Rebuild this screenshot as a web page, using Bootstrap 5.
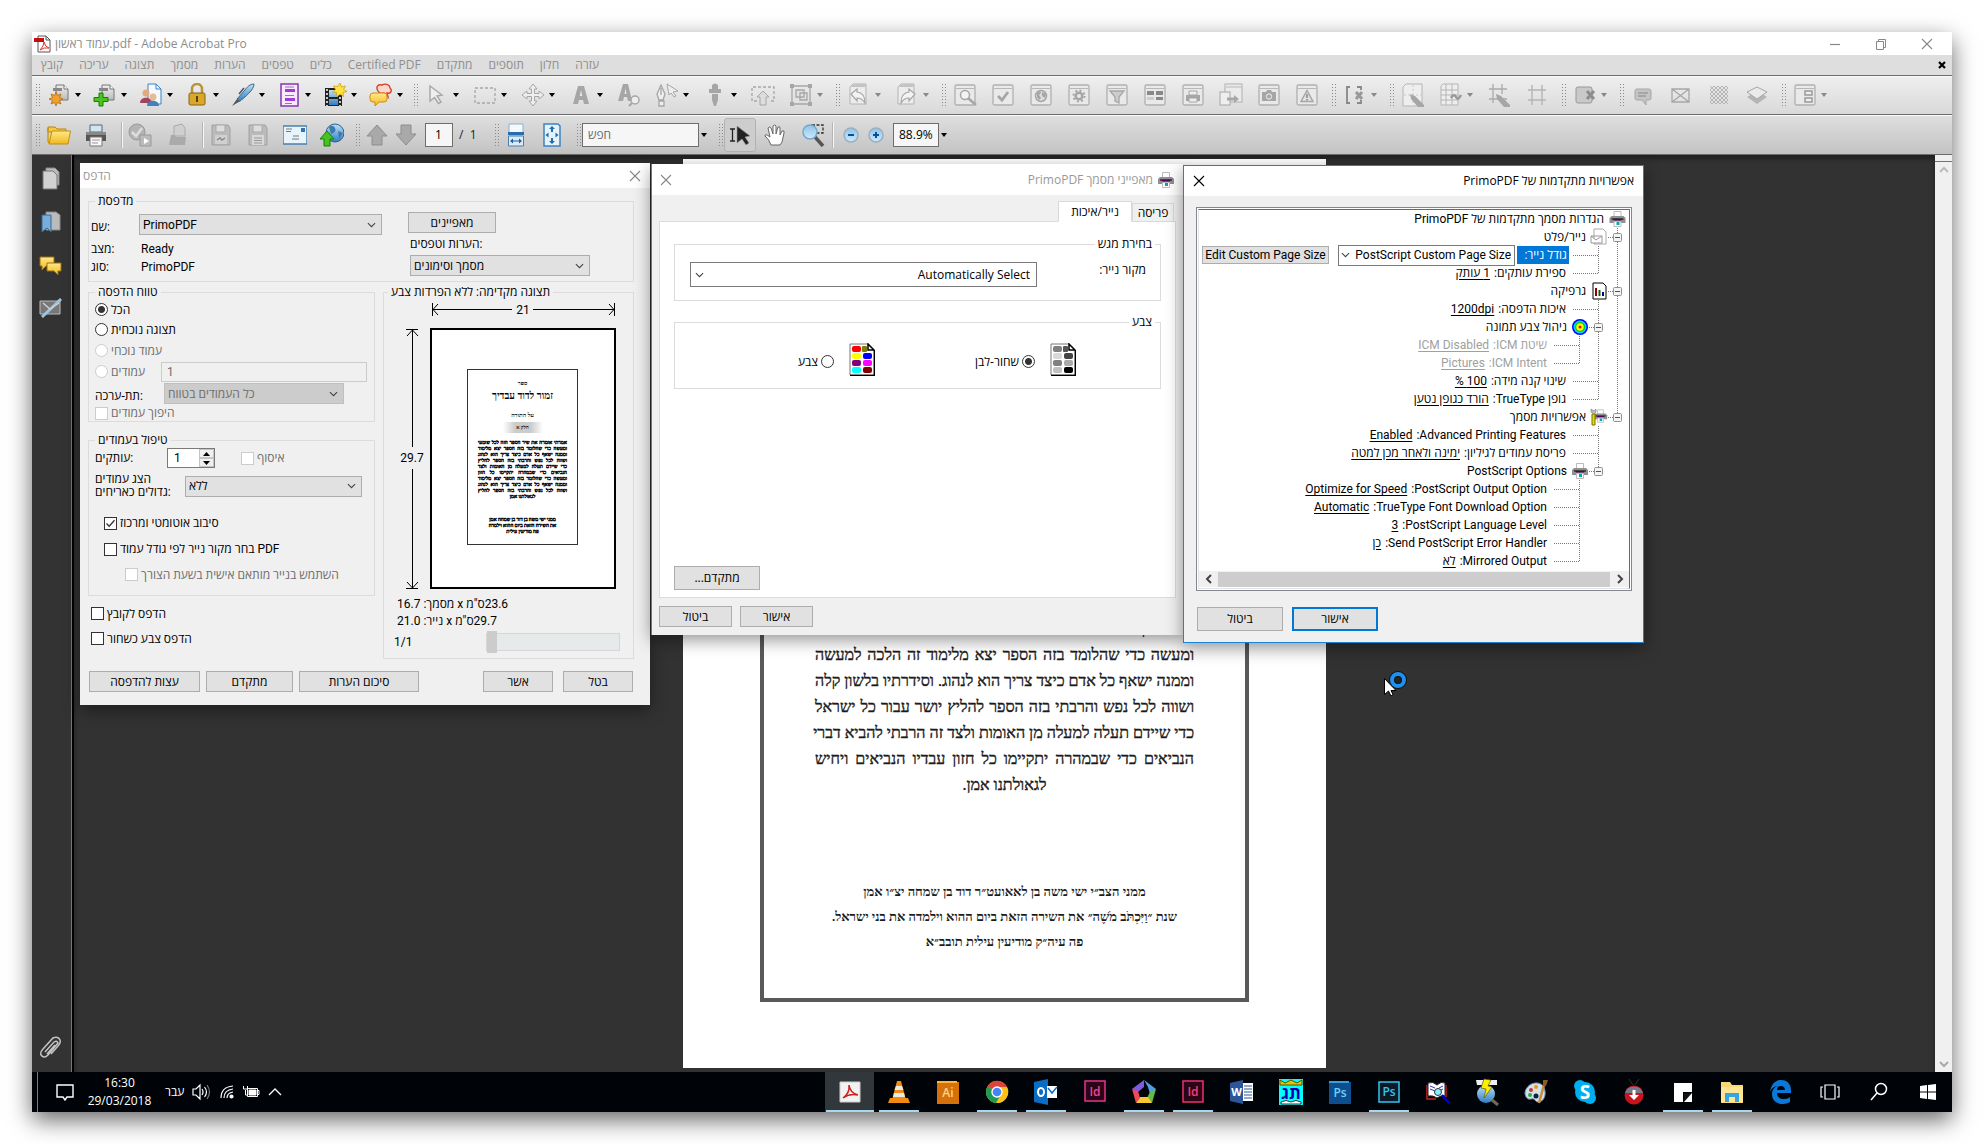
<!DOCTYPE html>
<html lang="he">
<head>
<meta charset="utf-8">
<meta name="viewport" content="width=device-width, initial-scale=1">
<title>עמוד ראשון.pdf - Adobe Acrobat Pro</title>
<link rel="stylesheet" href="https://cdn.jsdelivr.net/npm/bootstrap@5.3.0/dist/css/bootstrap.min.css">
<style>
:root{--ui:"Open Sans","Liberation Sans",sans-serif;--chev:url("data:image/svg+xml,%3Csvg xmlns='http://www.w3.org/2000/svg' viewBox='0 0 10 6'%3E%3Cpath d='M1 .8l4 4 4-4' fill='none' stroke='%23444' stroke-width='1.2'/%3E%3C/svg%3E")}
body{background:#fff;padding:32px;font-family:var(--ui);font-size:12px;line-height:16px;color:#000}
svg{display:block;flex:none}
button,input,select{font:inherit;color:inherit;border-radius:0;outline:0}
a{color:inherit}
.screen{min-height:calc(100vh - 64px);box-shadow:0 8px 22px rgba(0,0,0,.6);background:#323232;position:relative}
.titlebar{height:23px;background:#fff;color:#8c8c8c;padding:0 19px 0 2px}
.wctl{gap:34px}
.menubar{height:20px;background:#dedede;color:#8e8e8e;padding:0 5px 0 9px;gap:16px}
.menubar a{text-decoration:none}
.tbar{height:39px;border-top:1px solid #6b6b6b;box-shadow:inset 0 1px #fafafa;padding-left:3px}
.tbar-a{background:linear-gradient(#efefef,#d9d9d9);color:#a6a6a6}
.tbar-b{background:linear-gradient(#dfdfdf,#c3c3c3);border-bottom:1px solid #6b6b6b;height:41px;color:#999}
.grip{width:10px;height:24px;padding:0;background:radial-gradient(circle,#8b8b8b 0 1px,transparent 1px) 0 0/3px 3px repeat-y,radial-gradient(circle,#8b8b8b 0 1px,transparent 1px) 3px 0/3px 3px repeat-y;flex:none}
.grip-s{width:6px}
.tb{width:38px;height:34px;border:0;background:none;padding:0 0 0 2px;display:flex;align-items:center;gap:4px;flex:none}
.tb.dd{width:48px}.tb.task{width:46px}
.tb svg{width:24px;height:24px}
.tb.dd::after,.tb.task::after,.car::after{content:"";border:3px solid transparent;border-top:4px solid #000;border-bottom:0}
.tb.off::after{border-top-color:#888}
.tb.tb2{width:37px}
.tb.nav-a{width:29px;padding:0}
.tb.fit{width:36px;padding:0}
.tb.pick{width:37px;padding-left:8px}
.tb.zm{width:25px;padding-left:4px}
.tb.zm svg{width:20px}
.car{display:flex;align-items:center;padding-left:2px;width:19px}
.tb.tool-on{width:32px;border:1px solid #b2b2b2;background:#cdcdcd;border-radius:3px;padding:0 3px}
.vsep{width:2px;height:26px;background:#f6f6f6;border-left:1px solid #b5b5b5;margin:0 3px 0 2px;flex:none}
.tfield{height:24px;border:1px solid #6d6d6d;background:#f6f6f6;padding:0 5px;color:#000}
.f-page{width:28px;padding:0 9px;margin-left:2px}.f-find{width:117px}.f-find::placeholder{color:#6a6a6a}.f-zoom{width:46px;margin-left:6px}
.of{width:41px;padding-left:6px;color:#222;white-space:nowrap}
.side{width:42px;background:#333;border-right:2px solid #000;box-shadow:inset -1px 0 #777;padding:12px 2px 12px 0;gap:21px}
.canvas{background:#323232;box-shadow:inset 0 4px 4px #202020;padding:4px 0;min-width:0}
.vscroll{width:17px;background:#f0f0f0}
.sc-top{height:7px}
.paper{width:643px;background:#fff}
.pframe{width:489px;border:4px solid #58595b;font-family:"Liberation Serif",serif;color:#1b1b1b;padding:0 51px 44px;margin:20px 0 66px}
.pline{font-size:16px;line-height:26px;white-space:nowrap;text-align:justify;text-align-last:justify;-webkit-text-stroke:.4px}
.pend{text-align-last:center;margin-bottom:81px}
.psign{font-size:13px;line-height:25px;text-align:center;white-space:nowrap;font-weight:700}
.dlg{position:absolute;background:#f0f0f0;box-shadow:0 5px 16px rgba(0,0,0,.42);white-space:nowrap}
.dlg-bar{background:#fff;color:#999}
.xbtn{border:0;background:none;padding:0}
.fs{border:1px solid #dcdcdc;margin:0;padding:0;min-width:0}
.fs>legend{float:none;width:auto;font-size:inherit;line-height:16px;margin:0 6px;padding:0 3px}
.wbtn{background:#e1e1e1;border:1px solid #adadad;height:21px;padding:0;line-height:18px}
.wsel{appearance:none;background:#e1e1e1 var(--chev) no-repeat right 5px center/9px 6px;border:1px solid #adadad;height:21px;padding:0 3px;line-height:18px}
.wsel:disabled{background-color:#ccc;border-color:#bfbfbf;color:#6d6d6d;opacity:1}
.ck,.rd{appearance:none;width:13px;height:13px;border:1px solid #333;background:#fff;margin:0;flex:none}
.rd{border-radius:50%}
.rd:checked{background:radial-gradient(circle,#333 0 3px,#fff 4px)}
.ck:checked{background:#fff url("data:image/svg+xml,%3Csvg xmlns='http://www.w3.org/2000/svg' viewBox='0 0 11 11'%3E%3Cpath d='M1.5 5.5l2.7 2.8 5.3-6' fill='none' stroke='%23333' stroke-width='1.3'/%3E%3C/svg%3E")}
.ck:disabled,.rd:disabled{border-color:#ccc}
.dis{color:#6d6d6d}
.opt{display:flex;align-items:center;gap:3px;height:21px}
/* print dialog */
#printDlg{left:48px;top:131px;width:570px;height:542px;font-family:Roboto,"Open Sans",sans-serif;z-index:1}
#printDlg .dlg-bar{height:25px;padding:0 8px 0 3px}
.pd-body{padding:5px 16px 0 8px}
.pd-l{width:48px;padding-left:2px}
.fieldin{border:1px solid #ccc;background:#f0f0f0;height:20px;padding:0 5px;color:#6d6d6d}
.spin{width:48px;height:20px;border:1px solid #7a7a7a;background:#fff}
.spin input{width:31px;border:0;padding:0 6px;background:none}
.spin button{height:9px;width:15px;border:1px solid #c4c4c4;background:#f0f0f0;padding:0;display:flex;align-items:center;justify-content:center}
.pv{width:186px;height:261px;border:2px solid #000;background:#fff;padding:39px 36px 0 35px}
.pv-in{height:176px;border:1px solid #333;font-family:"Liberation Serif",serif;text-align:center;font-weight:700;overflow:hidden;direction:rtl;padding:8px 10px 0}
.pv-s{font-size:6px;line-height:10px}
.pv-t{font-size:10px;line-height:15px;margin-bottom:7px}
.pv-pill{width:40px;margin:2px auto 7px;background:linear-gradient(90deg,#fff,#ccc 30%,#ccc 70%,#fff);font-size:5px;line-height:11px}
.pv-b{font-size:5px;line-height:6px;text-align-last:justify;-webkit-text-stroke:.4px}
.pv-c{text-align-last:center}
.pv-e{margin-bottom:17px}
.rng{appearance:none;width:134px;height:18px;border:1px solid #d6d6d6;background:#e7eaea;margin:0}
.rng::-webkit-slider-thumb{appearance:none;width:10px;height:22px;background:#ccc}
/* properties dialog */
#propDlg{left:619px;top:132px;width:532px;height:471px;z-index:2;border-left:1px solid #777}
#propDlg .dlg-bar{height:31px;padding:0 8px}
.pr-tabs{padding:7px 2px 0;height:27px;align-items:flex-end;direction:rtl;margin-bottom:-1px}
.pr-tab{border:1px solid #d9d9d9;background:#f0f0f0;padding:0 4px;height:19px;line-height:17px;text-align:center;width:42px}
.pr-tab.on{background:#fff;width:74px;height:21px;line-height:19px;border-bottom-color:#fff}
.pr-panel{height:377px;border:1px solid #dcdcdc;background:#fff;padding:14px 14px 7px}
.combo{background:#fff var(--chev) no-repeat left 4px center/9px 6px;border-color:#7a7a7a;direction:rtl}
/* advanced dialog */
#advDlg{left:1151px;top:133px;width:461px;height:478px;z-index:3;border:1px solid #1883d7}
#advDlg .dlg-bar{height:30px;color:#000;padding:0 9px}
.tree{border:1px solid #828790;background:#fff;padding:1px;font-family:Roboto,"Open Sans",sans-serif}
.tree-in{border:1px solid #e3e3e3;border-top-color:#696969;border-right-color:#696969}
.tree ul{list-style:none;margin:0;padding:0 2px 0 0}
.tree li{display:flex;height:18px;align-items:center;direction:rtl}
.tree .ind{width:19px;height:18px;flex:none}
.tree .leaf{width:35px;height:18px;flex:none;margin-left:7px}
.tree .tic{width:18px;height:18px;margin-left:4px}
.tree a{margin-right:4px;text-decoration:underline;text-underline-offset:2px}
.tree .gr{color:#a0a0a0}
.tree .combo{width:177px;margin-right:2px;padding:0 3px 0 0;background-position:left 2px center}
.hsc{height:16px;background:#f0f0f0;margin:1px 0 1px}
.hsc i{background:#cdcdcd;height:15px;flex:1}
.hsc button{width:19px;border:0;background:none;padding:0;display:flex;justify-content:center}
/* taskbar */
.task-b{height:40px;background:#000408;color:#fff}
.tapp{width:49px;height:40px;border:0;background:none;padding:0;display:flex;align-items:center;justify-content:center}
.run{background:linear-gradient(#a6d8f2,#a6d8f2) center bottom/40px 2px no-repeat}
.cur{background:linear-gradient(#a6d8f2,#a6d8f2) center bottom/48px 2px no-repeat,#32373b}
.tray{gap:8px;padding-left:5px}
.deskline{width:1px;height:40px;background:#777;margin-right:10px}
.clock{line-height:18px;width:75px}
.ptr{position:absolute;left:1348px;top:632px;z-index:4}
</style>
<script src="https://cdn.jsdelivr.net/npm/bootstrap@5.3.0/dist/js/bootstrap.bundle.min.js"></script>
</head>
<body>
<svg width="0" height="0" class="position-absolute"><defs>
<linearGradient id="gb" x2="0" y2="1"><stop stop-color="#bfe0f5"/><stop offset="1" stop-color="#2f7fc0"/></linearGradient>
<linearGradient id="gz" x2="0" y2="1"><stop stop-color="#8cc4ea"/><stop offset="1" stop-color="#cfe9fa"/></linearGradient>
<linearGradient id="gy" x2="0" y2="1"><stop stop-color="#ffe98a"/><stop offset="1" stop-color="#f1b81c"/></linearGradient>
<linearGradient id="gg" x2="0" y2="1"><stop stop-color="#eee"/><stop offset="1" stop-color="#bbb"/></linearGradient>
<symbol id="pgs" viewBox="0 0 24 24"><path d="M9 2h8l4 4v11H9z" fill="url(#gg)" stroke="#777"/><path d="M6 5h9v3H6z" fill="#888"/><path d="M17 2v4h4" fill="#fff" stroke="#777"/></symbol>
<symbol id="t1" viewBox="0 0 24 24"><use href="#pgs"/><path d="M9 9l1.500 3.500 3.500-1.500-1.500 3.500 3.500 1.500-3.500 1.500 1.500 3.500-3.500-1.500L9 23l-1.500-3.500L4 21l1.500-3.500L2 16l3.500-1.500L4 11l3.500 1.500z" fill="#f0a030" stroke="#b06a10" stroke-width=".8"/></symbol>
<symbol id="t2" viewBox="0 0 24 24"><use href="#pgs"/><path d="M6 10h4v4.500h5v4h-5V23H6v-4.500H1v-4h5z" fill="#48c41c" stroke="#1d7a08"/></symbol>
<symbol id="t3" viewBox="0 0 24 24"><path d="M9 1h8l5 5v15H9z" fill="#f2f9ff" stroke="#3f82bd"/><path d="M17 1v5h5" fill="none" stroke="#3f82bd"/><circle cx="7" cy="10" r="3.500" fill="#e2a97d"/><path d="M1 20c0-7 12-7 12 0z" fill="#a5435b"/><circle cx="14" cy="14" r="3.500" fill="#e9b98f"/><path d="M8 23c0-7 12-7 12 0z" fill="#4283bd"/></symbol>
<symbol id="t4" viewBox="0 0 24 24"><path d="M7 11V6a5 5 0 0110 0v5" fill="none" stroke="#b9953a" stroke-width="2.500"/><rect x="4" y="10" width="16" height="12" rx="1.500" fill="#d9a72a" stroke="#876114"/><path d="M12 13v6M11 14h2" stroke="#5b4009" stroke-width="2"/></symbol>
<symbol id="t5" viewBox="0 0 24 24"><path d="M23 1c-4 0-7 3-9 6L6 16l2.500 2.500C14 14 23 7 23 1z" fill="url(#gb)" stroke="#3f6682"/><path d="M13 5L8 11" stroke="#456" stroke-width="1.500"/><path d="M6 16l2.500 2.500L1 23z" fill="#555"/></symbol>
<symbol id="t6" viewBox="0 0 24 24"><rect x="4" y="1" width="17" height="22" fill="#f6eafc" stroke="#8637b0" stroke-width="1.500"/><path d="M8 6h10v3H8zM8 15h10v3H8z" fill="#a33bd6"/><path d="M8 4h9M8 12.500h9M8 20.500h7" stroke="#a070bb"/></symbol>
<symbol id="t7" viewBox="0 0 24 24"><path d="M2 5h17v18H2z" fill="#222"/><path d="M6 7h9v7H6zM6 16h9v6H6z" fill="url(#gb)"/><path d="M4 6v17M17 6v17" stroke="#fff" stroke-width="1.500" stroke-dasharray="2 2"/><path d="M17 0l1.500 4 4-1-2 3.500 3.500 2-4 1 .5 4-3.500-2.500-3 3-.5-4.500-4-.5 3-2.500-2-3.500 4 .5z" fill="#ffe23a" stroke="#c7970c" stroke-width=".7"/></symbol>
<symbol id="t8" viewBox="0 0 24 24"><path d="M9 8C6 3 10 1 13 2c4-2 8 0 8 3 3 3 0 6-3 5l1 4-4-4c-3 1-5 0-6-2z" fill="#fbd8cf" stroke="#d8412a" stroke-width="1.400"/><path d="M4 10h11q3 0 3 3v3q0 3-3 3h-5l-4 4v-4H4q-3 0-3-3v-3q0-3 3-3z" fill="url(#gy)" stroke="#d08c12"/></symbol>
<symbol id="g1" viewBox="0 0 24 24"><path d="M5 3l12 9-5 1 4 6-2.500 1.500-4-6L5 18z" fill="#eee" stroke="currentColor" stroke-width="1.400"/></symbol>
<symbol id="g2" viewBox="0 0 24 24"><path d="M2 5h20v15H2z" fill="none" stroke="currentColor" stroke-width="1.300" stroke-dasharray="3 2"/></symbol>
<symbol id="g3" viewBox="0 0 24 24"><path d="M12 1l4 5h-2.500v4.500H18V8l5 4-5 4v-2.500h-4.500V18H16l-4 5-4-5h2.500v-4.500H6V16l-5-4 5-4v2.500h4.500V6H8z" fill="#eee" stroke="currentColor"/></symbol>
<symbol id="g4" viewBox="0 0 24 24"><path d="M9 3h6l5 18h-5l-1-4h-4l-1 4H4zM12 7l-1.300 6h2.600z" fill="currentColor" fill-rule="evenodd"/></symbol>
<symbol id="g5" viewBox="0 0 24 24"><path d="M6 1h5l4 17h-4l-1-4H7l-1 4H1zM8.500 5l-1 6h2z" fill="currentColor" fill-rule="evenodd"/><circle cx="18" cy="17" r="4" fill="#eee" stroke="currentColor" stroke-width="1.500"/><path d="M15 20l-3 3" stroke="currentColor" stroke-width="2"/></symbol>
<symbol id="g6" viewBox="0 0 24 24"><path d="M6 2L2 11l2 6h4l2-6zM6 5v7M4 18h5v5H4z" fill="#eee" stroke="currentColor" stroke-width="1.300"/><path d="M12 1l11 7-5 1 3 4-2 1-3-4-2 2z" fill="#eee" stroke="currentColor"/></symbol>
<symbol id="g7" viewBox="0 0 24 24"><path d="M9 2q3-3 6 0v4h3v4H6V6h3zM9 11h6v6l-2 6h-2l-2-6z" fill="currentColor"/></symbol>
<symbol id="g8" viewBox="0 0 24 24"><path d="M6 18H1V4h22v14h-5" fill="none" stroke="currentColor" stroke-width="1.300" stroke-dasharray="3 2"/><path d="M12 8l6 6h-3v8H9v-8H6z" fill="#ddd" stroke="currentColor"/></symbol>
<symbol id="g9" viewBox="0 0 24 24"><path d="M3 3h18v18H3z" fill="none" stroke="currentColor" stroke-width="1.300"/><path d="M1 1h4v4H1zM19 1h4v4h-4zM1 19h4v4H1zM19 19h4v4h-4z" fill="currentColor"/><path d="M7 7h8v7H7zM11 10h7v7h-7z" fill="#ddd" fill-opacity=".5" stroke="currentColor" stroke-width="1.300"/></symbol>
<symbol id="pg" viewBox="0 0 24 24"><path d="M6 1h13v20H3V4z" fill="#ececec" stroke="#b5b5b5"/><path d="M6 1h13v3H4z" fill="#c4c4c4"/></symbol>
<symbol id="g10" viewBox="0 0 24 24"><use href="#pg"/><path d="M4 11l6-5v3q8 1 8 11-3-5-8-5v3z" fill="#f3f3f3" stroke="currentColor" stroke-width="1.200"/></symbol>
<symbol id="g11" viewBox="0 0 24 24"><use href="#pg"/><path d="M20 11l-6-5v3q-8 1-8 11 3-5 8-5v3z" fill="#f3f3f3" stroke="currentColor" stroke-width="1.200"/></symbol>
<symbol id="wn" viewBox="0 0 24 24"><rect x="2" y="2" width="20" height="20" rx="1.500" fill="#e9e9e9" stroke="#b0b0b0" stroke-width="1.300"/><path d="M3 5.500h18" stroke="#b8b8b8"/></symbol>
<symbol id="g12" viewBox="0 0 24 24"><use href="#wn"/><circle cx="12" cy="12" r="4.500" fill="#f3f3f3" stroke="currentColor" stroke-width="1.500"/><path d="M15 15l8 7" stroke="currentColor" stroke-width="2.500"/></symbol>
<symbol id="g13" viewBox="0 0 24 24"><use href="#wn"/><path d="M7 13l4 4 6-8" fill="none" stroke="currentColor" stroke-width="2.800"/></symbol>
<symbol id="g14" viewBox="0 0 24 24"><use href="#wn"/><circle cx="12" cy="13" r="5.500" fill="#ddd" stroke="currentColor" stroke-width="1.500"/><path d="M8 10l3-2 1 2-2 2 2 3-2 2-2-3zM13 9l4 2-1 4-3-2z" fill="currentColor"/></symbol>
<symbol id="g15" viewBox="0 0 24 24"><use href="#wn"/><circle cx="12" cy="13" r="3.300" fill="none" stroke="currentColor" stroke-width="2.500"/><circle cx="12" cy="13" r="5.500" fill="none" stroke="currentColor" stroke-width="2" stroke-dasharray="2 2.300"/></symbol>
<symbol id="g16" viewBox="0 0 24 24"><use href="#wn"/><path d="M5 8h14l-5 6v6l-4-2v-4z" fill="#ccc" stroke="currentColor" stroke-width="1.300"/></symbol>
<symbol id="g17" viewBox="0 0 24 24"><use href="#wn"/><path d="M4 8h7v4H4zM13 8h7v4h-7zM13 14h7v3h-7z" fill="#888"/><path d="M4 14h7v3H4z" fill="#ccc"/></symbol>
<symbol id="g18" viewBox="0 0 24 24"><use href="#wn"/><path d="M8 8h8v4H8z" fill="#eee" stroke="currentColor"/><path d="M5 12h14v6H5z" fill="currentColor"/><path d="M8 15h8v4H8z" fill="#eee" stroke="currentColor"/></symbol>
<symbol id="g19" viewBox="0 0 24 24"><rect x="6" y="1" width="17" height="18" fill="#eaeaea" stroke="#b0b0b0"/><path d="M7 4h15" stroke="#b8b8b8"/><rect x="1" y="9" width="10" height="13" fill="#eee" stroke="currentColor"/><path d="M8 14.500h7V12l5 4-5 4v-2.500H8z" fill="currentColor"/></symbol>
<symbol id="g20" viewBox="0 0 24 24"><use href="#wn"/><path d="M5 9h4l1-2h4l1 2h4v9H5z" fill="currentColor"/><circle cx="12" cy="13.500" r="2.700" fill="#aaa" stroke="#eee"/></symbol>
<symbol id="g21" viewBox="0 0 24 24"><use href="#wn"/><path d="M12 7.500l6 11H6z" fill="#e2e2e2" stroke="currentColor" stroke-width="1.500"/><path d="M12 11v4M12 16v1.500" stroke="#888" stroke-width="1.500"/></symbol>
<symbol id="g22" viewBox="0 0 24 24"><path d="M7 4H4v16h3M14 4h4v3M14 20h4v-3" fill="none" stroke="#888" stroke-width="1.800"/><path d="M13 9l6 7M19 9l-6 7" stroke="#999" stroke-width="3"/></symbol>
<symbol id="g23" viewBox="0 0 24 24"><path d="M5 1h16v22H2V4z" fill="#eee" stroke="#b5b5b5"/><path d="M12 2v20M3 12h18" stroke="#c8c8c8" stroke-dasharray="2 2"/><path d="M9 11l5 2 9 9v2h-6l-7-8z" fill="currentColor"/></symbol>
<symbol id="g24" viewBox="0 0 24 24"><path d="M4 1h15v21H2V3zM2 7h17M2 12h17M2 17h17M7 1v21M13 1v21" fill="#eee" stroke="#b5b5b5"/><path d="M12 15q3-5 5-1t5-2" fill="none" stroke="#999" stroke-width="2.500"/></symbol>
<symbol id="g25" viewBox="0 0 24 24"><path d="M2 6h18M2 16h18M6 1v19M15 1v10" stroke="#aaa" stroke-width="1.300"/><path d="M9 11l5 2 9 9v2h-6l-7-8z" fill="currentColor"/></symbol>
<symbol id="g26" viewBox="0 0 24 24"><path d="M3 7h18M3 17h18M7 2v20M17 2v20" stroke="#b5b5b5" stroke-width="1.400"/></symbol>
<symbol id="g27" viewBox="0 0 24 24"><rect x="3" y="4" width="16" height="16" rx="2" fill="#c9c9c9" stroke="#999"/><path d="M14 8l7 8M21 8l-7 8" stroke="#8c8c8c" stroke-width="3"/></symbol>
<symbol id="g28" viewBox="0 0 24 24"><path d="M6 6h12q2 0 2 2v7q0 2-2 2h-3v5l-4-5H6q-2 0-2-2V8q0-2 2-2z" fill="#c4c4c4" stroke="currentColor"/><path d="M7 10h10M7 13h8" stroke="#888"/></symbol>
<symbol id="g29" viewBox="0 0 24 24"><path d="M3 6h17v13H3zM3 6l17 13M20 6L3 19" fill="none" stroke="currentColor" stroke-width="1.300"/></symbol>
<pattern id="pc" width="4" height="4" patternUnits="userSpaceOnUse"><path d="M0 0h2v2H0zM2 2h2v2H2z" fill="#b5b5b5"/></pattern>
<symbol id="g30" viewBox="0 0 24 24"><path d="M3 3h18v18H3z" fill="url(#pc)"/></symbol>
<symbol id="g31" viewBox="0 0 24 24"><path d="M2 14l10 7 10-7-10-6z" fill="#b5b5b5"/><path d="M2 9l10 7 10-7-10-5z" fill="#eaeaea" stroke="currentColor"/></symbol>
<symbol id="g32" viewBox="0 0 24 24"><use href="#wn"/><path d="M12 8h7v4h-7zM12 15h7v4h-7z" fill="#eee" stroke="#999" stroke-width="1.500"/></symbol>
<symbol id="b1" viewBox="0 0 24 24"><path d="M1 4h7l2 2h9v3H1z" fill="#f5c93c" stroke="#b8860b"/><path d="M1 5v14l2 2" fill="#f5c93c" stroke="#b8860b"/><path d="M2 21L5 8h18.500l-2.500 13z" fill="url(#gy)" stroke="#c28f10"/></symbol>
<symbol id="b2" viewBox="0 0 24 24"><path d="M6 2h12v7H6z" fill="#cfe6f2" stroke="#567"/><path d="M2 9h20v9H2z" fill="#555"/><path d="M2 9h20v3H2z" fill="#888"/><path d="M6 14h12v9H6z" fill="#f6f6f6" stroke="#777"/><path d="M8 17h8M8 20h6" stroke="#999"/></symbol>
<symbol id="b3" viewBox="0 0 24 24"><circle cx="9" cy="9" r="8" fill="#b4b4b4" stroke="#999"/><path d="M4 9l4 4 6-8" stroke="#ddd" stroke-width="2.500" fill="none"/><path d="M12 12h11v11H12z" fill="#bbb" stroke="#999"/><path d="M16 15l5 3-5 3z" fill="#fff"/></symbol>
<symbol id="b4" viewBox="0 0 24 24"><path d="M9 3l8-2 3 4v8H9z" fill="#cfcfcf" stroke="#aaa"/><path d="M4 22l2-10h4l1 2h10l-1 8z" fill="#aaa"/></symbol>
<symbol id="b5" viewBox="0 0 24 24"><path d="M3 2h16l2 3v17H3z" fill="#bbb" stroke="#a0a0a0"/><path d="M7 2h9v7H7z" fill="#ddd" stroke="#aaa"/><path d="M6 12h12v9H6z" fill="#d0d0d0"/><path d="M8 17l3-2 2 2 3-2" stroke="#888" fill="none" stroke-width="1.500"/></symbol>
<symbol id="b6" viewBox="0 0 24 24"><path d="M3 2h16l2 3v17H3z" fill="#bbb" stroke="#a0a0a0"/><path d="M7 2h9v7H7z" fill="#ddd" stroke="#aaa"/><path d="M6 12h12v10H6z" fill="#d8d8d8"/><path d="M8 15h8M8 17.500h8M8 20h8" stroke="#999"/></symbol>
<symbol id="b7" viewBox="0 0 24 24"><path d="M0 3h24v18H0z" fill="#e8f4fb" stroke="#4a80b0" stroke-width="1.500"/><path d="M18 5h4v4h-4z" fill="#2f73b0"/><path d="M3 6h6M3 8.500h5M10 13h6M9 16h7" stroke="#777"/></symbol>
<symbol id="b8" viewBox="0 0 24 24"><circle cx="15" cy="10" r="9" fill="url(#gb)" stroke="#2c5c8c"/><path d="M9 4q4-3 6 1t-4 6zM18 8l5 2-4 6z" fill="#3c7ab2"/><path d="M7 8l7 8h-4v7H4v-7H0z" fill="#46c31c" stroke="#1d7a08"/></symbol>
<symbol id="b9" viewBox="0 0 24 24"><path d="M12 2l10 11h-5v9H7v-9H2z" fill="#a9a9a9" stroke="#8d8d8d"/></symbol>
<symbol id="b10" viewBox="0 0 24 24"><path d="M12 22L2 11h5V2h10v9h5z" fill="#a9a9a9" stroke="#8d8d8d"/></symbol>
<symbol id="b11" viewBox="0 0 24 24"><path d="M5 1h14v9H5z" fill="#f3f9fd" stroke="#8fb0c8"/><path d="M4 9h16v3H4z" fill="#2a6da8"/><path d="M4.500 13h15v10h-15z" fill="#dcecf7" stroke="#4a80b0"/><path d="M6 18l3-2.500v2h6v-2l3 2.500-3 2.500v-2H9v2z" fill="#1e5fa0"/></symbol>
<symbol id="b12" viewBox="0 0 24 24"><path d="M4 1h14l2 2v20H4z" fill="#e4f2fb" stroke="#3f82bd" stroke-width="1.500"/><path d="M12 3l3 3h-2v3h-2V6H9zM12 21l3-3h-2v-3h-2v3H9zM5.500 12l3-2.500v5zM18.500 12l-3-2.500v5z" fill="#1e6bb0"/></symbol>
<symbol id="b13" viewBox="0 0 24 24"><path d="M2 6h5M4.500 6v12M2 18h5" stroke="#222" stroke-width="1.300"/><path d="M9 3l13 10-5 1 4 6-3 2-4-6-5 4z" fill="#222" stroke="#999" stroke-width=".6"/></symbol>
<symbol id="b14" viewBox="0 0 24 24"><path d="M7 22q-2-6-6-9 0-3 5 1L4 5q2-2 3 0l2 6V3q2-2 3 0v8l2-7q2-1 2 1v7l2-4q3-1 2 2l-2 9-2 3z" fill="#fff" stroke="#666"/></symbol>
<symbol id="b15" viewBox="0 0 24 24"><path d="M11 2h11v8H11z" fill="none" stroke="#333" stroke-dasharray="3 1.500" stroke-width="1.300"/><path d="M14 14l8 9" stroke="#555" stroke-width="3.500"/><circle cx="9" cy="9" r="7" fill="url(#gz)" stroke="#78a6c8" stroke-width="1.500"/></symbol>
<symbol id="zm1" viewBox="0 0 20 20"><circle cx="10" cy="10" r="7" fill="url(#gz)" stroke="#9ab0bd" stroke-width="1.500"/><path d="M7 10h6" stroke="#0b4f94" stroke-width="2"/></symbol>
<symbol id="zm2" viewBox="0 0 20 20"><use href="#zm1"/><path d="M10 7v6" stroke="#0b4f94" stroke-width="2"/></symbol>
<symbol id="prn" viewBox="0 0 18 18"><path d="M5.500 1.500h7v6h-7z" fill="#fff" stroke="#bbb"/><path d="M1 8l2-2h12l2 2v5H1z" fill="#909090"/><path d="M3 8h12v2H3z" fill="#444"/><path d="M5 9h8v1.500H5z" fill="#506"/><path d="M5.500 11.500h7v5h-7z" fill="#fff" stroke="#bbb"/><path d="M8 12h3v3H8z" fill="#0aa"/></symbol>
<symbol id="vl" viewBox="0 0 19 18"><path d="M9.500 0v18" stroke="#777" stroke-dasharray="1 1"/></symbol>
<symbol id="ex" viewBox="0 0 19 18"><path d="M9.500 0v18M0 9.500h9" stroke="#777" stroke-dasharray="1 1"/><rect x="5.500" y="5.500" width="8" height="8" rx="1" fill="#f4f4f4" stroke="#919191"/><path d="M7 9.500h5" stroke="#3b4fa0"/></symbol>
<symbol id="exl" viewBox="0 0 19 18"><path d="M9.500 0v9M0 9.500h9" stroke="#777" stroke-dasharray="1 1"/><rect x="5.500" y="5.500" width="8" height="8" rx="1" fill="#f4f4f4" stroke="#919191"/><path d="M7 9.500h5" stroke="#3b4fa0"/></symbol>
<symbol id="lf" viewBox="0 0 35 18"><path d="M25.500 0v18M0 9.500h25" stroke="#777" stroke-dasharray="1 1"/></symbol>
<symbol id="ll" viewBox="0 0 35 18"><path d="M25.500 0v10M0 9.500h25" stroke="#777" stroke-dasharray="1 1"/></symbol>
<symbol id="xx" viewBox="0 0 12 12"><path d="M1 1l10 10M11 1L1 11" stroke="currentColor" stroke-width="1.100"/></symbol>
</defs></svg>

<div class="screen d-flex flex-column">
<header class="titlebar d-flex align-items-center">
<svg width="17" height="18" viewBox="0 0 17 18"><path d="M4 1h8l4 4v12H4z" fill="#fff" stroke="#555"/><path d="M12 1v4h4" fill="none" stroke="#555"/><path d="M0 3h10v4H0z" fill="#c40d0d"/><path d="M6 15q4-4 4-8 1 5 5 6-5-1-9 2z" fill="none" stroke="#e03030"/></svg>
<span class="ps-1" dir="ltr"><bdi>עמוד ראשון</bdi>.pdf - Adobe Acrobat Pro</span>
<div class="wctl ms-auto d-flex align-items-center">
<button class="xbtn" aria-label="מזער"><svg width="12" height="12"><path d="M1 6.500h10" stroke="#888" stroke-width="1.200"/></svg></button>
<button class="xbtn" aria-label="שחזר"><svg width="12" height="12" fill="none" stroke="#888"><path d="M1.500 3.500h7v8h-7zM3.500 3V1.500h7v8H9"/></svg></button>
<button class="xbtn" aria-label="סגור"><svg width="12" height="12" color="#888"><use href="#xx"/></svg></button>
</div>
</header>
<nav class="menubar d-flex align-items-center">
<a href="#">קובץ</a><a href="#">עריכה</a><a href="#">תצוגה</a><a href="#">מסמך</a><a href="#">הערות</a><a href="#">טפסים</a><a href="#">כלים</a><a href="#">Certified PDF</a><a href="#">מתקדם</a><a href="#">תוספים</a><a href="#">חלון</a><a href="#">עזרה</a>
<button class="xbtn ms-auto" aria-label="סגור מסמך"><svg width="9" height="8" viewBox="0 0 9 8"><path d="M1 1l6 6M7 1L1 7" stroke="#000" stroke-width="2.200"/></svg></button>
</nav>
<div class="tbar tbar-a d-flex align-items-center">
<span class="grip"></span>
<button class="tb task" aria-label="צור"><svg><use href="#t1"/></svg></button><button class="tb task" aria-label="שלב"><svg><use href="#t2"/></svg></button><button class="tb task" aria-label="שתף"><svg><use href="#t3"/></svg></button><button class="tb task" aria-label="אבטחה"><svg><use href="#t4"/></svg></button><button class="tb task" aria-label="חתימה"><svg><use href="#t5"/></svg></button><button class="tb task" aria-label="טפסים"><svg><use href="#t6"/></svg></button><button class="tb task" aria-label="מולטימדיה"><svg><use href="#t7"/></svg></button><button class="tb task" aria-label="הערה"><svg><use href="#t8"/></svg></button>
<span class="grip"></span>
<button class="tb dd" aria-label="בחירה"><svg><use href="#g1"/></svg></button><button class="tb dd" aria-label="חיתוך"><svg><use href="#g2"/></svg></button><button class="tb dd" aria-label="הזזה"><svg><use href="#g3"/></svg></button><button class="tb dd" aria-label="טקסט"><svg><use href="#g4"/></svg></button><button class="tb" aria-label="חפש טקסט"><svg><use href="#g5"/></svg></button><button class="tb dd" aria-label="עט"><svg><use href="#g6"/></svg></button><button class="tb dd" aria-label="טפטפת"><svg><use href="#g7"/></svg></button><button class="tb" aria-label="מקם"><svg><use href="#g8"/></svg></button><button class="tb dd off" aria-label="יישור"><svg><use href="#g9"/></svg></button>
<span class="grip"></span>
<button class="tb dd off" aria-label="בטל פעולה"><svg><use href="#g10"/></svg></button><button class="tb dd off" aria-label="בצע שוב"><svg><use href="#g11"/></svg></button>
<span class="grip"></span>
<button class="tb" aria-label="בדיקה"><svg><use href="#g12"/></svg></button><button class="tb" aria-label="אימות"><svg><use href="#g13"/></svg></button><button class="tb" aria-label="גלובלי"><svg><use href="#g14"/></svg></button><button class="tb" aria-label="הגדרות"><svg><use href="#g15"/></svg></button><button class="tb" aria-label="מסנן"><svg><use href="#g16"/></svg></button><button class="tb" aria-label="פריסה"><svg><use href="#g17"/></svg></button><button class="tb" aria-label="דפוס"><svg><use href="#g18"/></svg></button><button class="tb" aria-label="ייצוא"><svg><use href="#g19"/></svg></button><button class="tb" aria-label="צילום"><svg><use href="#g20"/></svg></button><button class="tb" aria-label="אזהרות"><svg><use href="#g21"/></svg></button>
<span class="grip"></span>
<button class="tb dd off" aria-label="סוגריים"><svg><use href="#g22"/></svg></button>
<span class="grip"></span>
<button class="tb" aria-label="עריכת עמוד"><svg><use href="#g23"/></svg></button><button class="tb dd off" aria-label="רשת"><svg><use href="#g24"/></svg></button><button class="tb" aria-label="עריכת רשת"><svg><use href="#g25"/></svg></button><button class="tb" aria-label="קווי רשת"><svg><use href="#g26"/></svg></button>
<span class="grip"></span>
<button class="tb dd off" aria-label="מחק"><svg><use href="#g27"/></svg></button>
<span class="grip"></span>
<button class="tb" aria-label="הערות"><svg><use href="#g28"/></svg></button><button class="tb" aria-label="מעטפה"><svg><use href="#g29"/></svg></button><button class="tb" aria-label="שקיפות"><svg><use href="#g30"/></svg></button><button class="tb" aria-label="שכבות"><svg><use href="#g31"/></svg></button>
<span class="grip"></span>
<button class="tb dd off" aria-label="חלונית"><svg><use href="#g32"/></svg></button>
</div>
<div class="tbar tbar-b d-flex align-items-center">
<span class="grip"></span>
<button class="tb tb2" aria-label="פתח"><svg><use href="#b1"/></svg></button><button class="tb tb2" aria-label="הדפס"><svg><use href="#b2"/></svg></button>
<span class="vsep"></span>
<button class="tb tb2" aria-label="אמת"><svg><use href="#b3"/></svg></button><button class="tb tb2" aria-label="ארגן"><svg><use href="#b4"/></svg></button>
<span class="vsep"></span>
<button class="tb tb2" aria-label="שמור חתום"><svg><use href="#b5"/></svg></button><button class="tb tb2" aria-label="שמור"><svg><use href="#b6"/></svg></button><button class="tb tb2" aria-label="דואר"><svg><use href="#b7"/></svg></button><button class="tb tb2" aria-label="העלה"><svg><use href="#b8"/></svg></button>
<span class="grip"></span>
<button class="tb nav-a" aria-label="עמוד קודם"><svg><use href="#b9"/></svg></button><button class="tb nav-a" aria-label="עמוד הבא"><svg><use href="#b10"/></svg></button>
<input class="tfield f-page" value="1" aria-label="עמוד"><span class="of">/&nbsp; 1</span>
<span class="grip"></span>
<button class="tb fit" aria-label="התאם לרוחב"><svg><use href="#b11"/></svg></button><button class="tb fit" aria-label="התאם לעמוד"><svg><use href="#b12"/></svg></button>
<span class="grip grip-s"></span>
<input class="tfield f-find" placeholder="חפש" aria-label="חפש"><span class="car"></span>
<span class="grip grip-s"></span>
<button class="tb tool-on" aria-label="כלי בחירה"><svg><use href="#b13"/></svg></button><button class="tb pick" aria-label="יד"><svg><use href="#b14"/></svg></button><button class="tb pick" aria-label="זום"><svg><use href="#b15"/></svg></button>
<span class="vsep"></span>
<button class="tb zm" aria-label="הקטן"><svg><use href="#zm1"/></svg></button><button class="tb zm" aria-label="הגדל"><svg><use href="#zm2"/></svg></button>
<input class="tfield f-zoom" value="88.9%" aria-label="זום"><span class="car"></span>
</div>

<main class="d-flex flex-grow-1">
<aside class="side d-flex flex-column align-items-center">
<svg width="20" height="23" viewBox="0 0 20 23"><path d="M5 1h9l4 4v13H5z" fill="#bbb" stroke="#888"/><path d="M2 4h10l4 4v14H2z" fill="#d2d2d2" stroke="#777"/></svg>
<svg width="20" height="22" viewBox="0 0 20 22"><path d="M5 1h10l4 3v15H5z" fill="#bbb" stroke="#888"/><path d="M1 4h9v17l-4-4-5 4z" fill="#79aeda" stroke="#346a99"/></svg>
<svg width="24" height="22" viewBox="0 0 24 22"><path d="M1 3h14v9H7l-4 4v-4H1z" fill="url(#gy)" stroke="#9a6f0a"/><path d="M8 9h14v8h-3v4l-4-4H8z" fill="url(#gy)" stroke="#9a6f0a"/></svg>
<svg width="24" height="22" viewBox="0 0 24 22"><path d="M1 4h20v13H1z" fill="#777" stroke="#bbb"/><path d="M3 20L22 2" stroke="#9cc3e0" stroke-width="3"/><path d="M4 6l7 6 9-6" stroke="#ccc" stroke-width="1.500" fill="none"/></svg>
<svg class="mt-auto" width="22" height="24" viewBox="0 0 22 24"><path d="M5 16l9-10q3-2 4 1l-10 12q-4 4-7 0-1-3 2-6L13 2q5-2 7 2 1 3-2 6l-7 8M7 18l8-9" fill="none" stroke="#c4c4c4" stroke-width="1.500"/></svg>
</aside>
<section class="canvas flex-grow-1 d-flex justify-content-center">
<article class="paper d-flex flex-column align-items-center justify-content-end" dir="rtl">
<div class="pframe flex-grow-1 d-flex flex-column justify-content-end">
<div class="pline">בכל דרך לימודו ועיונו של האדם בהלכות התורה לשמור</div>
<div class="pline">ומעשה כדי שהלומד בזה הספר יצא מלימוד זה הלכה למעשה</div>
<div class="pline">וממנה ישאף כל אדם כיצד צריך הוא לנהוג. וסידרתיו בלשון קלה</div>
<div class="pline">ושווה לכל נפש והרבתי בזה הספר להליץ יושר עבור כל ישראל</div>
<div class="pline">כדי שיידם תעלה למעלה מן האומות ולצד זה הרבתי להביא דברי</div>
<div class="pline">הנביאים כדי שבמהרה יתקיימו כל חזון עבדיו הנביאים ויחיש</div>
<div class="pline pend">לגאולתנו אמן.</div>
<div class="psign">ממני הצב״י ישי משה בן לאאועט״ר דוד בן שמחה יצ״ו אמן</div>
<div class="psign">שנת ״וַיִּכְתֹּב מֹשֶׁה״ את השירה הזאת ביום ההוא וילמדה את בני ישראל.</div>
<div class="psign">פה עיה״ק מודיעין עילית תובב״א</div>
</div>
</article>
</section>
<div class="vscroll d-flex flex-column justify-content-between align-items-center pb-1">
<div class="sc-top w-100 border-bottom border-secondary"></div>
<svg width="10" height="8" class="mt-1 mb-auto"><path d="M1 6l4-4 4 4" fill="none" stroke="#bbb" stroke-width="2"/></svg>
<svg width="10" height="8"><path d="M1 2l4 4 4-4" fill="none" stroke="#aaa" stroke-width="2"/></svg>
</div>
</main>

<footer class="task-b d-flex">
<div class="tray d-flex align-items-center">
<span class="deskline"></span>
<svg width="18" height="18" fill="none" stroke="#fff" stroke-width="1.400"><path d="M1 2h16v12h-6l-2 3-2-3H1z"/></svg>
<span class="clock text-center">16:30<br>29/03/2018</span>
<span>עבר</span>
<svg width="20" height="16" fill="none" stroke="#fff" stroke-width="1.200"><path d="M1 5h3l4-4v14l-4-4H1zM10 5q2 3 0 6M12.500 3q4 5 0 10"/><path d="M15 1q5 7 0 14" stroke="#777"/></svg>
<svg width="14" height="14" fill="none" stroke="#fff" stroke-width="1.200"><path d="M1 13Q1 2 13 1M4 13q0-8 9-9M7 13q0-5 6-6"/><circle cx="11.500" cy="11.500" r="1.500" fill="#fff"/></svg>
<svg width="18" height="14" fill="none" stroke="#fff"><path d="M5.500 3.500h10v8h-10zM16 5.500h1v4h-1M1.500 1v3h4V1M3.500 5v5h2"/><path d="M7 5h7v5H7z" fill="#fff"/></svg>
<svg width="14" height="14" fill="none" stroke="#fff" stroke-width="1.300"><path d="M1 10l6-6 6 6"/></svg>
</div>
<div class="ms-auto d-flex">
<button class="tapp cur" aria-label="Acrobat"><svg width="22" height="22" viewBox="0 0 22 22"><path d="M1 1h20v20H1z" fill="#f2f2f2" stroke="#ccc"/><path d="M4 17q7-5 6-13 1 8 9 10-8-2-15 3z" fill="none" stroke="#c8201c" stroke-width="1.500"/></svg></button>
<button class="tapp run" aria-label="VLC"><svg width="22" height="24" viewBox="0 0 22 24"><path d="M2 18h18l2 5H0z" fill="#f28a10"/><path d="M9 1h4l5 19H4z" fill="#f58b0e"/><path d="M8 6h6l1.500 4h-9zM6 13h10l1 4H5z" fill="#e9e9e9"/></svg></button>
<button class="tapp" aria-label="Illustrator"><svg width="22" height="24"><path d="M0 2h22v22H0z" fill="#d4710b"/><path d="M0 1h20v2H0z" fill="#ffb23c"/><text x="11" y="17" font-size="12" font-weight="600" text-anchor="middle" fill="#ffd28c">Ai</text></svg></button>
<button class="tapp run" aria-label="Chrome"><svg width="24" height="24" viewBox="0 0 24 24"><circle cx="12" cy="12" r="11" fill="#fbc116"/><path d="M12 12L2.500 6.500A11 11 0 0122 7H12z" fill="#db4437"/><path d="M12 12L2.500 6.500A11 11 0 0011 23l5-8.500z" fill="#1a9b57"/><path d="M12 7h10a11 11 0 01-10.500 16l5-8.500z" fill="#fbc116"/><circle cx="12" cy="12" r="5" fill="#4285f4" stroke="#fff" stroke-width="1.300"/></svg></button>
<button class="tapp run" aria-label="Outlook"><svg width="24" height="26" viewBox="0 0 24 26"><path d="M0 3l14-3v26L0 23z" fill="#0a6cc2"/><path d="M13 7h10v12H13z" fill="#fff"/><path d="M14 9l4 5 5-6" fill="none" stroke="#0a6cc2" stroke-width="1.500"/><ellipse cx="7" cy="13" rx="3" ry="4" fill="none" stroke="#fff" stroke-width="2"/></svg></button>
<button class="tapp" aria-label="InDesign"><svg width="22" height="24"><path d="M1 1h20v20H1z" fill="#2b0515" stroke="#e8328c" stroke-width="1.500"/><text x="11" y="16" font-size="12" font-weight="600" text-anchor="middle" fill="#f0449a">Id</text></svg></button>
<button class="tapp run" aria-label="Pentagon"><svg width="26" height="26" viewBox="0 0 26 26"><path d="M13 1L1 10l6 3 6-5z" fill="#7b5be0"/><path d="M13 1l12 9-6 5-2-7z" fill="#4e9ee8"/><path d="M25 10l-4 14-5-5 3-6z" fill="#63b94a"/><path d="M21 24H5l4-6h8z" fill="#f7c92f"/><path d="M5 24L1 10l6 2 2 7z" fill="#ee4a5a"/></svg></button>
<button class="tapp run" aria-label="InDesign CC"><svg width="22" height="24"><path d="M1 1h20v21H1z" fill="#2b0515" stroke="#f0306e" stroke-width="1.500"/><text x="11" y="16" font-size="12" font-weight="600" text-anchor="middle" fill="#fb3d7a">Id</text></svg></button>
<button class="tapp" aria-label="Word"><svg width="24" height="24"><path d="M11 3h12v18H11z" fill="#fff"/><path d="M14 6h8M14 9h8M14 12h8M14 15h8M14 18h8" stroke="#2b579a"/><path d="M0 3l13-3v24L0 21z" fill="#2b579a"/><text x="6.500" y="16" font-size="11" font-weight="700" text-anchor="middle" fill="#fff">W</text></svg></button>
<button class="tapp" aria-label="תג"><svg width="24" height="26"><path d="M0 0h24v26H0z" fill="#0ff"/><path d="M1 1l5 3 6-3 6 3 5-3v5H1z" fill="#e3c400" stroke="#550"/><path d="M2 23q5-3 10 0 5-3 10 0v2H2z" fill="#fff" stroke="#333"/><text x="12" y="20" font-size="17" font-weight="700" text-anchor="middle" fill="#00a">תג</text></svg></button>
<button class="tapp" aria-label="Photoshop CS"><svg width="22" height="24"><path d="M0 2h22v22H0z" fill="#0d4f8e"/><path d="M0 1h20v2H0z" fill="#3aa0dc"/><text x="11" y="17" font-size="12" font-weight="600" text-anchor="middle" fill="#6fd0fa">Ps</text></svg></button>
<button class="tapp run" aria-label="Photoshop"><svg width="22" height="24"><path d="M1 2h20v20H1z" fill="#0b1a26" stroke="#35c2f2" stroke-width="1.500"/><text x="11" y="16" font-size="12" font-weight="600" text-anchor="middle" fill="#35c2f2">Ps</text></svg></button>
<button class="tapp" aria-label="ספר"><svg width="24" height="24" viewBox="0 0 24 24"><path d="M1 5v14h9M20 5v12" fill="none" stroke="#c22" stroke-width="1.500"/><path d="M2 3q5-2 9 2 4-4 8-2v13q-4-1-8 2-4-3-9-2z" fill="#fff" stroke="#222"/><path d="M4 6l5 2M4 9l5 2M13 8l4-2M13 11l4-2" stroke="#33c"/><circle cx="12" cy="12" r="3.500" fill="#8ef" stroke="#333"/><path d="M16 15l7 8" stroke="#00c" stroke-width="2.500"/></svg></button>
<button class="tapp" aria-label="חיפוש מהיר"><svg width="24" height="28" viewBox="0 0 24 28"><circle cx="11" cy="16" r="9" fill="url(#gb)"/><path d="M17 22l6 5" stroke="#765" stroke-width="3"/><path d="M1 2h8v5H2zM14 2h8v5h-8z" fill="#eee"/><path d="M9 1l7 1-3 6 4 1-8 11 2-9-5-1z" fill="#fe0" stroke="#440" stroke-width=".6"/></svg></button>
<button class="tapp" aria-label="צייר"><svg width="24" height="26" viewBox="0 0 24 26"><path d="M11 4C3 5-2 14 3 19c3 3 5-1 8 2 2 4 9 2 10-5C22 9 18 3 11 4z" fill="#cfe1ee" stroke="#78a"/><circle cx="7" cy="11" r="2" fill="#c33"/><circle cx="12" cy="8" r="2" fill="#e90"/><circle cx="6" cy="16" r="2" fill="#3a3"/><circle cx="12" cy="17" r="2.500" fill="#123"/><path d="M21 2l-6 22" stroke="#c98b3c" stroke-width="2.500"/><path d="M19 1h5l-2 6h-3z" fill="#8a5a2a"/></svg></button>
<button class="tapp" aria-label="Skype"><svg width="24" height="26" viewBox="0 0 24 26"><circle cx="12" cy="13" r="10" fill="#00aff0"/><circle cx="7" cy="7" r="6" fill="#00aff0"/><circle cx="17" cy="19" r="6" fill="#00aff0"/><text x="12" y="20" font-size="19" font-weight="700" text-anchor="middle" fill="#fff">S</text></svg></button>
<button class="tapp" aria-label="הורדה"><svg width="22" height="26" viewBox="0 0 22 26"><path d="M6 0l4 6M16 0l-4 6" stroke="#333"/><circle cx="11" cy="16" r="9.500" fill="#c8141c"/><path d="M2 14a9.500 9.500 0 0118 0z" fill="#778"/><path d="M9.500 11h3v5H16l-5 5-5-5h3.500z" fill="#fff"/></svg></button>
<button class="tapp run" aria-label="פתקים"><svg width="20" height="22"><path d="M1 2h18v9h-9v10H1z" fill="#fff"/><path d="M11 12h8l-8 9z" fill="#111"/><path d="M19 12v9h-8z" fill="#fff"/></svg></button>
<button class="tapp run" aria-label="סייר הקבצים"><svg width="24" height="22"><path d="M1 1h9l2 3h11v18H1z" fill="#fcd975"/><path d="M1 6h22v15H1z" fill="#ffe694"/><path d="M5 21v-9h14v9h-4v-5H9v5z" fill="#35a6e0"/></svg></button>
<button class="tapp" aria-label="Edge"><svg width="24" height="26" viewBox="0 0 24 26"><path d="M1 13C2 5 7 1 12 1c7 0 10 5 10 10v3H8c0 4 3 6 7 6 3 0 5-1 6-2v5c-2 1-4 2-7 2C7 25 3 21 3 15c0-4 2-7 6-8-4 0-7 3-8 6zM8 11h8c0-3-2-4-4-4s-4 1-4 4z" fill="#0a78d7" fill-rule="evenodd"/></svg></button>
<button class="tapp" aria-label="תצוגת משימות"><svg width="20" height="18" fill="none" stroke="#fff" stroke-width="1.200"><path d="M5 2h10v14H5zM3 4H1v10h2M17 4h2v10h-2"/></svg></button>
<button class="tapp" aria-label="חיפוש"><svg width="18" height="20" fill="none" stroke="#fff" stroke-width="1.500"><circle cx="11" cy="7" r="5.500"/><path d="M7 11l-6 7"/></svg></button>
<button class="tapp" aria-label="התחל"><svg width="18" height="18" fill="#fff"><path d="M1 3l7-1v6.500H1zM9 2l8-1v7.500H9zM1 9.500h7V16l-7-1zM9 9.500h8V17l-8-1z"/></svg></button>
</div>
</footer>

<section class="dlg" id="printDlg" aria-label="הדפס">
<div class="dlg-bar d-flex align-items-center justify-content-between"><span>הדפס</span><button class="xbtn" aria-label="סגור"><svg width="14" height="12" color="#888"><use href="#xx"/></svg></button></div>
<div class="pd-body">
<fieldset class="fs" style="height:89px"><legend>מדפסת</legend>
<div class="d-flex">
<div style="width:319px;padding-top:5px">
<div class="d-flex align-items-center"><label class="pd-l pt-1" for="prn1">שם:&#8206;</label><select class="wsel" id="prn1" style="width:243px;margin-left:2px"><option>PrimoPDF</option></select></div>
<div class="d-flex" style="margin-top:5px;line-height:18px"><span class="pd-l">מצב:&#8206;</span><span class="ps-1">Ready</span></div>
<div class="d-flex" style="line-height:18px"><span class="pd-l">סוג:&#8206;</span><span class="ps-1">PrimoPDF</span></div>
</div>
<div class="d-flex flex-column align-items-start" style="padding-top:3px"><button class="wbtn" style="width:88px">מאפיינים</button><label for="frm" style="line-height:22px;padding-left:2px">הערות וטפסים:&#8206;</label><select class="wsel" id="frm" style="width:180px;margin-left:2px"><option>מסמך וסימונים</option></select></div>
</div></fieldset>
<div class="d-flex" style="gap:8px;margin-top:2px">
<div style="width:287px">
<fieldset class="fs" style="height:138px;padding:0 6px"><legend style="margin:0">טווח הדפסה</legend>
<div class="opt" style="height:19px"><input class="rd" type="radio" name="r" id="r1" checked><label for="r1">הכל</label></div>
<div class="opt"><input class="rd" type="radio" name="r" id="r2"><label for="r2">תצוגה נוכחית</label></div>
<div class="opt dis"><input class="rd" type="radio" name="r" id="r3" disabled><label for="r3">עמוד נוכחי</label></div>
<div class="opt dis"><input class="rd" type="radio" name="r" id="r4" disabled><label for="r4" style="width:47px">עמודים</label><input class="fieldin" style="width:206px" value="1" disabled aria-label="עמודים"></div>
<div class="d-flex align-items-center" style="height:23px"><label for="sub" class="pt-1" style="width:69px">תת-ערכה:&#8206;</label><select class="wsel" id="sub" style="width:180px" disabled><option>כל העמודים בטווח</option></select></div>
<div class="opt dis" style="height:16px"><input class="ck" type="checkbox" id="c1" disabled><label for="c1">היפוך עמודים</label></div>
</fieldset>
<fieldset class="fs" style="height:164px;margin-top:10px;padding:0 6px"><legend style="margin:0">טיפול בעמודים</legend>
<div class="d-flex align-items-center"><label for="cp" style="width:72px">עותקים:&#8206;</label><span class="spin d-flex"><input id="cp" value="1"><span class="d-flex flex-column"><button aria-label="הגדל"><svg width="7" height="4"><path d="M0 4l3.500-4L7 4z"/></svg></button><button aria-label="הקטן"><svg width="7" height="4"><path d="M0 0l3.500 4L7 0z"/></svg></button></span></span><span class="opt dis" style="margin-left:26px;height:20px"><input class="ck" type="checkbox" id="c2" disabled><label for="c2">איסוף</label></span></div>
<div class="d-flex align-items-center" style="margin-top:4px;height:28px"><label for="sc" style="line-height:13px;width:90px">הצג עמודים<br>גדולים כאריחים:&#8206;</label><select class="wsel" id="sc" style="width:177px"><option>ללא</option></select></div>
<div class="opt" style="height:26px;margin:10px 0 0 9px"><input class="ck" type="checkbox" id="c3" checked><label for="c3">סיבוב אוטומטי ומרכוז</label></div>
<div class="opt" style="height:26px;margin-left:9px"><input class="ck" type="checkbox" id="c4"><label for="c4">בחר מקור נייר לפי גודל עמוד PDF</label></div>
<div class="opt dis" style="height:25px;margin-left:30px"><input class="ck" type="checkbox" id="c5" disabled><label for="c5">השתמש בנייר מותאם אישית בשעת הצורך</label></div>
</fieldset>
<div style="padding:5px 0 0 3px"><div class="opt" style="height:25px"><input class="ck" type="checkbox" id="c6"><label for="c6">הדפס לקובץ</label></div><div class="opt" style="height:25px"><input class="ck" type="checkbox" id="c7"><label for="c7">הדפס צבע כשחור</label></div></div>
</div>
<fieldset class="fs flex-grow-1" style="height:375px"><legend style="margin:0 4px">תצוגה מקדימה: ללא הפרדות צבע</legend>
<svg width="184" height="19" style="margin:0 0 9px 47px"><path d="M1.500 3v13M183.500 3v13M2 9.500h79M102 9.500h81M7 4L2 9.500 7 15M178 4l5 5.500-5 5.500" fill="none" stroke="#000"/><text x="92" y="14" font-size="12" text-anchor="middle">21</text></svg>
<div class="d-flex" style="padding-left:14px;gap:3px">
<svg width="29" height="261"><path d="M8 1.500h12M8 260.500h12M14.500 2v117M14.500 141v119M9 8l5.500-6L20 8M9 254l5.500 6 5.500-6" fill="none" stroke="#000"/><text x="14" y="134" font-size="12" text-anchor="middle">29.7</text></svg>
<div class="pv"><div class="pv-in"><div class="pv-s">ספר</div><div class="pv-t">זמור לדוד עבדיך</div><div class="pv-s">על התורה</div><div class="pv-pill">חלק א</div>
<div class="pv-b">אמרתי אזמרה את שיר הספר הזה לכל שומעי</div><div class="pv-b">ומעשה כדי שהלומד בזה הספר יצא מלימוד</div><div class="pv-b">וממנה ישאף כל אדם כיצד צריך הוא לנהוג</div><div class="pv-b">ושווה לכל נפש והרבתי בזה הספר להליץ</div><div class="pv-b">כדי שיידם תעלה למעלה מן האומות ולצד</div><div class="pv-b">הנביאים כדי שבמהרה יתקיימו כל חזון</div><div class="pv-b">ומעשה כדי שהלומד בזה הספר יצא מלימוד</div><div class="pv-b">וממנה ישאף כל אדם כיצד צריך הוא לנהוג</div><div class="pv-b">ושווה לכל נפש והרבתי בזה הספר להליץ</div><div class="pv-b pv-c pv-e">לגאולתנו אמן</div>
<div class="pv-b pv-c">ממני ישי משה בן דוד בן שמחה אמן</div><div class="pv-b pv-c">את השירה הזאת ביום ההוא וילמדה</div><div class="pv-b pv-c">פה מודיעין עילית</div>
</div></div></div>
<div style="padding:7px 0 0 13px;line-height:17px"><div><bdi>מסמך: 16.7</bdi> x <bdi>ס"מ</bdi>&#8206;23.6</div><div><bdi>נייר: 21.0</bdi> x <bdi>ס"מ</bdi>&#8206;29.7</div></div>
<div class="d-flex align-items-center" style="height:24px;padding-left:10px"><label for="pgr" style="width:92px">1/1</label><input class="rng" id="pgr" type="range" min="0" max="10" value="0"></div>
</fieldset>
</div>
<div class="d-flex" style="margin:12px 1px 0"><button class="wbtn" style="width:111px">עצות להדפסה</button><button class="wbtn" style="width:87px;margin:0 6px">מתקדם</button><button class="wbtn" style="width:120px">סיכום הערות</button><button class="wbtn ms-auto" style="width:70px;margin-right:10px">אשר</button><button class="wbtn" style="width:70px">בטל</button></div>
</div>
</section>

<section class="dlg" id="propDlg" aria-label="מאפייני מסמך PrimoPDF">
<div class="dlg-bar d-flex align-items-center" dir="rtl"><svg width="18" height="18"><use href="#prn"/></svg><span style="margin-right:4px">מאפייני מסמך PrimoPDF</span><button class="xbtn" style="margin-right:auto" aria-label="סגור"><svg width="12" height="12" color="#888"><use href="#xx"/></svg></button></div>
<div style="padding:0 7px">
<div class="pr-tabs d-flex" role="tablist"><button class="pr-tab" role="tab">פריסה</button><button class="pr-tab on" role="tab">נייר/איכות</button></div>
<div class="pr-panel d-flex flex-column" dir="rtl">
<fieldset class="fs" style="height:65px"><legend style="margin:0 5px">בחירת מגש</legend>
<div class="d-flex justify-content-between" style="padding:10px 14px 0 14px"><label for="src">מקור נייר:</label><select class="wsel combo" id="src" style="width:347px;height:25px;padding-right:6px;margin-left:1px"><option>Automatically Select</option></select></div></fieldset>
<fieldset class="fs" style="height:75px;margin-top:13px"><legend style="margin:0 5px">צבע</legend>
<div class="d-flex align-items-center" style="padding:13px 84px 0 0">
<svg width="26" height="33"><path d="M1 1h18l6 6v25H1z" fill="#fff" stroke="#777"/><path d="M25.500 7v25.500H1M19 1v6h6z" fill="none" stroke="#000" stroke-width="1.500"/><rect x="3" y="3" width="9" height="6" rx="2" fill="#808080"/><rect x="13" y="3" width="5" height="6" rx="1" fill="#555"/><rect x="3" y="10" width="9" height="6" rx="2" fill="#d8d8d8"/><rect x="14" y="10" width="9" height="6" rx="2" fill="#444"/><rect x="3" y="17" width="9" height="6" rx="2" fill="#808080"/><rect x="14" y="17" width="9" height="6" rx="2" fill="#aaa"/><rect x="3" y="24" width="9" height="6" rx="2" fill="#c0c0c0"/><rect x="14" y="24" width="9" height="6" rx="2"/></svg>
<input class="rd" type="radio" name="k" id="k1" checked style="margin:4px 15px 0 3px"><label for="k1" class="pt-1">שחור-לבן</label>
<svg width="26" height="33" style="margin-right:100px"><path d="M1 1h18l6 6v25H1z" fill="#fff" stroke="#777"/><path d="M25.500 7v25.500H1M19 1v6h6z" fill="none" stroke="#000" stroke-width="1.500"/><rect x="3" y="3" width="9" height="6" rx="2" fill="red"/><rect x="13" y="3" width="5" height="6" rx="1" fill="olive"/><rect x="3" y="10" width="9" height="6" rx="2" fill="#ff0"/><rect x="14" y="10" width="9" height="6" rx="2" fill="#00f"/><rect x="3" y="17" width="9" height="6" rx="2" fill="purple"/><rect x="14" y="17" width="9" height="6" rx="2" fill="#f0f"/><rect x="3" y="24" width="9" height="6" rx="2" fill="#0ff"/><rect x="14" y="24" width="9" height="6" rx="2" fill="maroon"/></svg>
<input class="rd" type="radio" name="k" id="k2" style="margin:4px 15px 0 3px"><label for="k2" class="pt-1">צבע</label>
</div></fieldset>
<button class="wbtn mt-auto align-self-end" style="width:86px;height:24px">מתקדם...</button>
</div>
<div class="d-flex" style="gap:8px;padding-top:8px"><button class="wbtn" style="width:73px">ביטול</button><button class="wbtn" style="width:73px">אישור</button></div>
</div>
</section>

<section class="dlg" id="advDlg" aria-label="אפשרויות מתקדמות של PrimoPDF">
<div class="dlg-bar d-flex align-items-center justify-content-between" dir="rtl"><span>אפשרויות מתקדמות של PrimoPDF</span><button class="xbtn" aria-label="סגור"><svg width="12" height="12"><use href="#xx"/></svg></button></div>
<div style="padding:11px 11px 0 12px">
<div class="tree"><div class="tree-in"><ul>
<li><svg class="ind" style="margin-left:4px"><use href="#prn"/></svg>הגדרות מסמך מתקדמות של PrimoPDF</li>
<li><svg class="ind"><use href="#ex"/></svg><svg class="tic" viewBox="0 0 18 18"><path d="M4 1h9l3 3v12H4z" fill="#fff" stroke="#aaa"/><path d="M1 8h11v7H1zM1 8l5 4 6-4" fill="#fff" stroke="#999"/></svg>נייר/פלט</li>
<li><svg class="ind"><use href="#vl"/></svg><svg class="leaf" style="margin-left:4px"><use href="#lf"/></svg><label for="psz" class="text-white" style="background:#0078d7;padding:0 2px;width:52px;line-height:18px">גודל נייר:</label><select class="wsel combo position-relative" id="psz"><option>PostScript Custom Page Size</option></select><button class="wbtn" style="height:18px;width:127px;line-height:15px;margin-right:9px">Edit Custom Page Size</button></li>
<li><svg class="ind"><use href="#vl"/></svg><svg class="leaf"><use href="#ll"/></svg>ספירת עותקים:<a href="#">1 עותק</a></li>
<li><svg class="ind"><use href="#ex"/></svg><svg class="tic" viewBox="0 0 18 18"><path d="M3 1h10l3 3v13H3z" fill="#fff" stroke="#000"/><path d="M6 14V6" stroke="#800" stroke-width="2"/><path d="M9.500 14V8" stroke="#060" stroke-width="2"/><path d="M13 14v-4" stroke="#008" stroke-width="2"/></svg>גרפיקה</li>
<li><svg class="ind"><use href="#vl"/></svg><svg class="leaf"><use href="#lf"/></svg>איכות הדפסה:<a href="#">1200dpi</a></li>
<li><svg class="ind"><use href="#vl"/></svg><svg class="ind"><use href="#ex"/></svg><svg class="tic" viewBox="0 0 18 18"><circle cx="9" cy="9" r="8" fill="#00f"/><circle cx="9" cy="9" r="6.500" fill="#0df"/><circle cx="9" cy="9" r="5" fill="#0c0"/><circle cx="9" cy="9" r="3.700" fill="#ff0"/><circle cx="9" cy="9" r="1.500" fill="red"/></svg>ניהול צבע תמונה</li>
<li class="gr"><svg class="ind"><use href="#vl"/></svg><svg class="ind"><use href="#vl"/></svg><svg class="leaf"><use href="#lf"/></svg>שיטת ICM:<a href="#">ICM Disabled</a></li>
<li class="gr"><svg class="ind"><use href="#vl"/></svg><svg class="ind"><use href="#vl"/></svg><svg class="leaf"><use href="#ll"/></svg>ICM Intent:<a href="#">Pictures</a></li>
<li><svg class="ind"><use href="#vl"/></svg><svg class="leaf"><use href="#lf"/></svg>שינוי קנה מידה:<a href="#">100 %</a></li>
<li><svg class="ind"><use href="#vl"/></svg><svg class="leaf"><use href="#ll"/></svg>גופן TrueType:<a href="#">הורד כגופן נטען</a></li>
<li><svg class="ind"><use href="#exl"/></svg><svg class="tic" viewBox="0 0 18 18"><use href="#prn" x="3" width="15" height="16"/><path d="M2 6h3v11H2z" fill="#e3d800" stroke="#770"/><path d="M1 1l3 2 2-2v3L4 6 1 4z" fill="#bbb" stroke="#777" stroke-width=".6"/></svg>אפשרויות מסמך</li>
<li><svg class="ind"></svg><svg class="leaf"><use href="#lf"/></svg>Advanced Printing Features:<a href="#">Enabled</a></li>
<li><svg class="ind"></svg><svg class="leaf"><use href="#lf"/></svg>פריסת עמודים לגיליון:<a href="#">ימינה ולאחר מכן למטה</a></li>
<li><svg class="ind"></svg><svg class="ind"><use href="#exl"/></svg><svg class="tic"><use href="#prn"/></svg>PostScript Options</li>
<li><svg class="ind"></svg><svg class="ind"></svg><svg class="leaf"><use href="#lf"/></svg>PostScript Output Option:<a href="#">Optimize for Speed</a></li>
<li><svg class="ind"></svg><svg class="ind"></svg><svg class="leaf"><use href="#lf"/></svg>TrueType Font Download Option:<a href="#">Automatic</a></li>
<li><svg class="ind"></svg><svg class="ind"></svg><svg class="leaf"><use href="#lf"/></svg>PostScript Language Level:<a href="#">3</a></li>
<li><svg class="ind"></svg><svg class="ind"></svg><svg class="leaf"><use href="#lf"/></svg>Send PostScript Error Handler:<a href="#">כן</a></li>
<li><svg class="ind"></svg><svg class="ind"></svg><svg class="leaf"><use href="#ll"/></svg>Mirrored Output:<a href="#">לא</a></li>
</ul>
<div class="hsc d-flex align-items-center"><button aria-label="שמאלה"><svg width="8" height="10"><path d="M6 1L2 5l4 4" fill="none" stroke="#444" stroke-width="2"/></svg></button><i></i><button aria-label="ימינה"><svg width="8" height="10"><path d="M2 1l4 4-4 4" fill="none" stroke="#444" stroke-width="2"/></svg></button></div>
</div></div>
<div class="d-flex" style="gap:9px;padding:16px 0 0 1px"><button class="wbtn" style="width:86px;height:24px">ביטול</button><button class="wbtn" style="width:86px;height:24px;border:2px solid #0078d7">אישור</button></div>
</div>
</section>

<svg class="ptr" width="32" height="34"><path d="M4.500 14.500v16l4-3.500 2.500 5 2-1.500-2-4h5z" fill="#fff" stroke="#000"/><circle cx="18" cy="16" r="6" fill="#222" stroke="#111" stroke-width="6"/><circle cx="18" cy="16" r="6" fill="none" stroke="#1e90f0" stroke-width="4"/></svg>
</div>
</body>
</html>
